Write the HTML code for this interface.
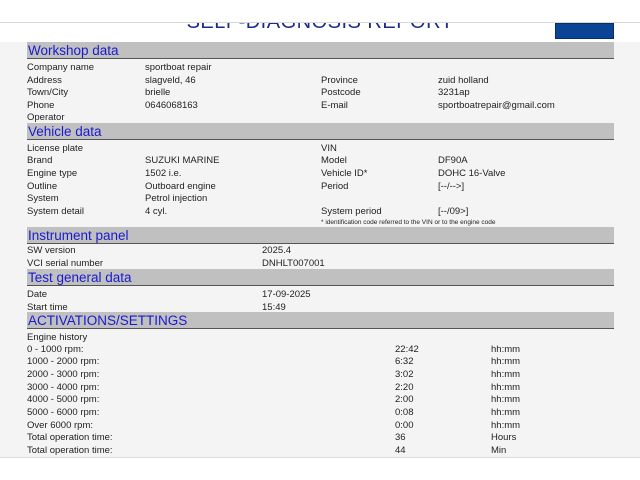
<!DOCTYPE html>
<html><head><meta charset="utf-8"><style>
*{margin:0;padding:0;box-sizing:border-box}
body{width:640px;height:480px;background:#fff;position:relative;overflow:hidden;font-family:"Liberation Sans",sans-serif;font-size:9.5px;color:#222}
.t{position:absolute;white-space:nowrap;line-height:12px;margin-top:1px}
.h{position:absolute;left:27px;width:587px;height:17px;background:#c0c0c0;border-bottom:1.5px solid #555;color:#1a1ad0;font-size:13.5px;line-height:18px;padding-left:1px}
</style></head><body>
<div style="position:absolute;left:0;top:22px;width:640px;height:1px;background:#d8d8d8"></div>
<div style="position:absolute;left:0;top:23px;width:640px;height:434px;background:#f4f4f4;overflow:hidden">
<div style="position:absolute;left:0;top:0;width:640px;height:19px;background:#fff"></div>
<div style="position:absolute;left:0;top:-12px;width:640px;text-align:center;font-size:20px;color:#1c2a8c;letter-spacing:0.5px">SELF-DIAGNOSIS REPORT</div>
<div style="position:absolute;left:555px;top:0;width:59px;height:16px;background:#0a4595;border:1px solid #062e6a"></div>
</div>
<div style="position:absolute;left:0;top:457px;width:640px;height:1px;background:#ddd"></div>

<div class="h" style="top:42px">Workshop data</div>
<div class="t" style="left:27px;top:61px">Company name</div><div class="t" style="left:145px;top:61px">sportboat repair</div>
<div class="t" style="left:27px;top:74px">Address</div><div class="t" style="left:145px;top:74px">slagveld, 46</div><div class="t" style="left:321px;top:74px">Province</div><div class="t" style="left:438px;top:74px">zuid holland</div>
<div class="t" style="left:27px;top:86px">Town/City</div><div class="t" style="left:145px;top:86px">brielle</div><div class="t" style="left:321px;top:86px">Postcode</div><div class="t" style="left:438px;top:86px">3231ap</div>
<div class="t" style="left:27px;top:99px">Phone</div><div class="t" style="left:145px;top:99px">0646068163</div><div class="t" style="left:321px;top:99px">E-mail</div><div class="t" style="left:438px;top:99px">sportboatrepair@gmail.com</div>
<div class="t" style="left:27px;top:111px">Operator</div>

<div class="h" style="top:123px">Vehicle data</div>
<div class="t" style="left:27px;top:142px">License plate</div><div class="t" style="left:321px;top:142px">VIN</div>
<div class="t" style="left:27px;top:154px">Brand</div><div class="t" style="left:145px;top:154px">SUZUKI MARINE</div><div class="t" style="left:321px;top:154px">Model</div><div class="t" style="left:438px;top:154px">DF90A</div>
<div class="t" style="left:27px;top:167px">Engine type</div><div class="t" style="left:145px;top:167px">1502 i.e.</div><div class="t" style="left:321px;top:167px">Vehicle ID*</div><div class="t" style="left:438px;top:167px">DOHC 16-Valve</div>
<div class="t" style="left:27px;top:180px">Outline</div><div class="t" style="left:145px;top:180px">Outboard engine</div><div class="t" style="left:321px;top:180px">Period</div><div class="t" style="left:438px;top:180px">[--/--&gt;]</div>
<div class="t" style="left:27px;top:192px">System</div><div class="t" style="left:145px;top:192px">Petrol injection</div>
<div class="t" style="left:27px;top:205px">System detail</div><div class="t" style="left:145px;top:205px">4 cyl.</div><div class="t" style="left:321px;top:205px">System period</div><div class="t" style="left:438px;top:205px">[--/09&gt;]</div>
<div class="t" style="left:321px;top:216px;font-size:6.5px">* identification code referred to the VIN or to the engine code</div>

<div class="h" style="top:227px">Instrument panel</div>
<div class="t" style="left:27px;top:244px">SW version</div><div class="t" style="left:262px;top:244px">2025.4</div>
<div class="t" style="left:27px;top:257px">VCI serial number</div><div class="t" style="left:262px;top:257px">DNHLT007001</div>

<div class="h" style="top:269px">Test general data</div>
<div class="t" style="left:27px;top:288px">Date</div><div class="t" style="left:262px;top:288px">17-09-2025</div>
<div class="t" style="left:27px;top:301px">Start time</div><div class="t" style="left:262px;top:301px">15:49</div>

<div class="h" style="top:312px">ACTIVATIONS/SETTINGS</div>
<div class="t" style="left:27px;top:331px">Engine history</div>
<div class="t" style="left:27px;top:343px">0 - 1000 rpm:</div><div class="t" style="left:395px;top:343px">22:42</div><div class="t" style="left:491px;top:343px">hh:mm</div>
<div class="t" style="left:27px;top:355px">1000 - 2000 rpm:</div><div class="t" style="left:395px;top:355px">6:32</div><div class="t" style="left:491px;top:355px">hh:mm</div>
<div class="t" style="left:27px;top:368px">2000 - 3000 rpm:</div><div class="t" style="left:395px;top:368px">3:02</div><div class="t" style="left:491px;top:368px">hh:mm</div>
<div class="t" style="left:27px;top:381px">3000 - 4000 rpm:</div><div class="t" style="left:395px;top:381px">2:20</div><div class="t" style="left:491px;top:381px">hh:mm</div>
<div class="t" style="left:27px;top:393px">4000 - 5000 rpm:</div><div class="t" style="left:395px;top:393px">2:00</div><div class="t" style="left:491px;top:393px">hh:mm</div>
<div class="t" style="left:27px;top:406px">5000 - 6000 rpm:</div><div class="t" style="left:395px;top:406px">0:08</div><div class="t" style="left:491px;top:406px">hh:mm</div>
<div class="t" style="left:27px;top:419px">Over 6000 rpm:</div><div class="t" style="left:395px;top:419px">0:00</div><div class="t" style="left:491px;top:419px">hh:mm</div>
<div class="t" style="left:27px;top:431px">Total operation time:</div><div class="t" style="left:395px;top:431px">36</div><div class="t" style="left:491px;top:431px">Hours</div>
<div class="t" style="left:27px;top:444px">Total operation time:</div><div class="t" style="left:395px;top:444px">44</div><div class="t" style="left:491px;top:444px">Min</div>
</body></html>
